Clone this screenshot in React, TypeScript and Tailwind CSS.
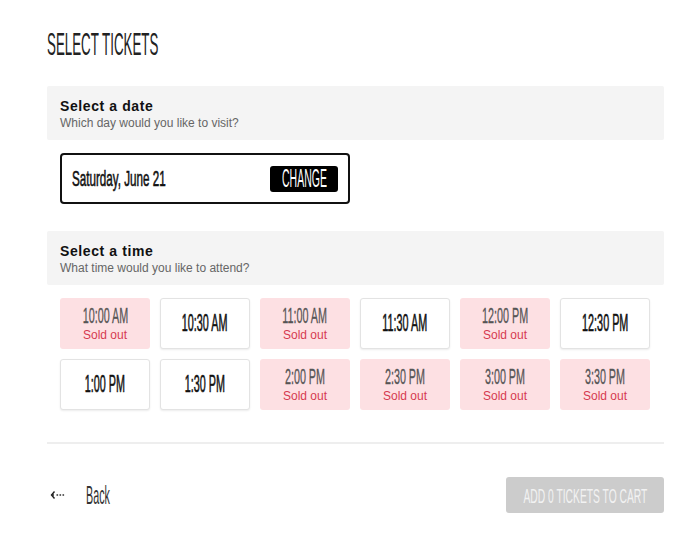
import React from 'react';

type Slot = { time: string; soldOut: boolean };

const slots: Slot[] = [
  { time: '10:00 AM', soldOut: true },
  { time: '10:30 AM', soldOut: false },
  { time: '11:00 AM', soldOut: true },
  { time: '11:30 AM', soldOut: false },
  { time: '12:00 PM', soldOut: true },
  { time: '12:30 PM', soldOut: false },
  { time: '1:00 PM', soldOut: false },
  { time: '1:30 PM', soldOut: false },
  { time: '2:00 PM', soldOut: true },
  { time: '2:30 PM', soldOut: true },
  { time: '3:00 PM', soldOut: true },
  { time: '3:30 PM', soldOut: true },
];

function SectionHeader({ title, subtitle }: { title: string; subtitle: string }) {
  return (
    <div className="rounded-[2px] bg-[#f4f4f4] px-[13px] pt-[12px] pb-[9px]">
      <p className="text-[14px] leading-[17px] font-bold tracking-[0.6px] text-[#111]">
        {title}
      </p>
      <p className="text-[12px] leading-[16px] text-[#666]">{subtitle}</p>
    </div>
  );
}

function TimeTile({ slot }: { slot: Slot }) {
  if (slot.soldOut) {
    return (
      <button className="flex h-[51px] flex-col items-center justify-center rounded-[3px] bg-[#fde0e3]">
        <span className="inline-block origin-center scale-x-[0.49] whitespace-nowrap text-[22px] leading-[22px] text-[#555] [-webkit-text-stroke:0.3px_#555]">
          {slot.time}
        </span>
        <span className="mt-[2px] text-[12px] leading-[13px] text-[#d63a50]">Sold out</span>
      </button>
    );
  }
  return (
    <button className="flex h-[51px] items-center justify-center rounded-[3px] border border-[#e3e3e3] bg-white shadow-[0_1px_2px_rgba(0,0,0,0.08)]">
      <span className="inline-block origin-center scale-x-[0.47] whitespace-nowrap text-[23px] leading-[23px] text-[#111] [-webkit-text-stroke:0.6px_#111]">
        {slot.time}
      </span>
    </button>
  );
}

export default function App() {
  return (
    <main className="min-h-screen bg-white font-['Liberation_Sans',Arial,sans-serif]">
      <div className="ml-[47px] w-[617px] pt-[29px]">
        <h1 className="h-[31px] whitespace-nowrap">
          <span className="inline-block origin-left scale-x-[0.43] text-[31px] leading-[31px] font-normal text-[#222]">
            SELECT TICKETS
          </span>
        </h1>

        <section className="mt-[26px]">
          <SectionHeader title="Select a date" subtitle="Which day would you like to visit?" />
          <div className="ml-[13px] mt-[13px] flex h-[51px] w-[290px] items-center justify-between rounded-[4px] border-2 border-[#111] pl-[10px] pr-[10px]">
            <span className="inline-block origin-left scale-x-[0.53] whitespace-nowrap text-[22px] leading-[22px] text-[#111] [-webkit-text-stroke:0.6px_#111]">
              Saturday, June 21
            </span>
            <button className="flex h-[26px] w-[68px] items-center justify-center overflow-visible rounded-[3px] bg-black">
              <span className="inline-block origin-center scale-x-[0.42] whitespace-nowrap text-[25px] leading-[25px] text-white">
                CHANGE
              </span>
            </button>
          </div>
        </section>

        <section className="mt-[27px]">
          <SectionHeader title="Select a time" subtitle="What time would you like to attend?" />
          <div className="ml-[13px] mt-[13px] grid w-[590px] grid-cols-6 gap-[10px]">
            {slots.map((slot) => (
              <TimeTile key={slot.time} slot={slot} />
            ))}
          </div>
        </section>

        <div className="mt-[32px] h-[2px] bg-[#eeeeee]" />

        <div className="mt-[33px] flex items-center justify-between">
          <button className="flex items-center">
            <svg width="16" height="10" viewBox="0 0 16 10" className="ml-[3px]">
              <path d="M4.5 1.5 1.5 5l3 3.5" fill="none" stroke="#222" strokeWidth="1.4" />
              <rect x="2" y="4.3" width="2" height="1.4" fill="#222" />
              <rect x="6.5" y="4.3" width="1.6" height="1.4" fill="#222" />
              <rect x="9.5" y="4.3" width="1.6" height="1.4" fill="#222" />
              <rect x="12.5" y="4.3" width="1.6" height="1.4" fill="#222" />
            </svg>
            <span className="ml-[20px] inline-block origin-left scale-x-[0.43] text-[25px] leading-[25px] text-[#333]">
              Back
            </span>
          </button>
          <button className="flex h-[36px] w-[158px] items-center justify-center rounded-[3px] bg-[#cccccc]">
            <span className="inline-block origin-center scale-x-[0.49] whitespace-nowrap text-[21px] leading-[21px] text-[#f2f2f2]">
              ADD 0 TICKETS TO CART
            </span>
          </button>
        </div>
      </div>
    </main>
  );
}
